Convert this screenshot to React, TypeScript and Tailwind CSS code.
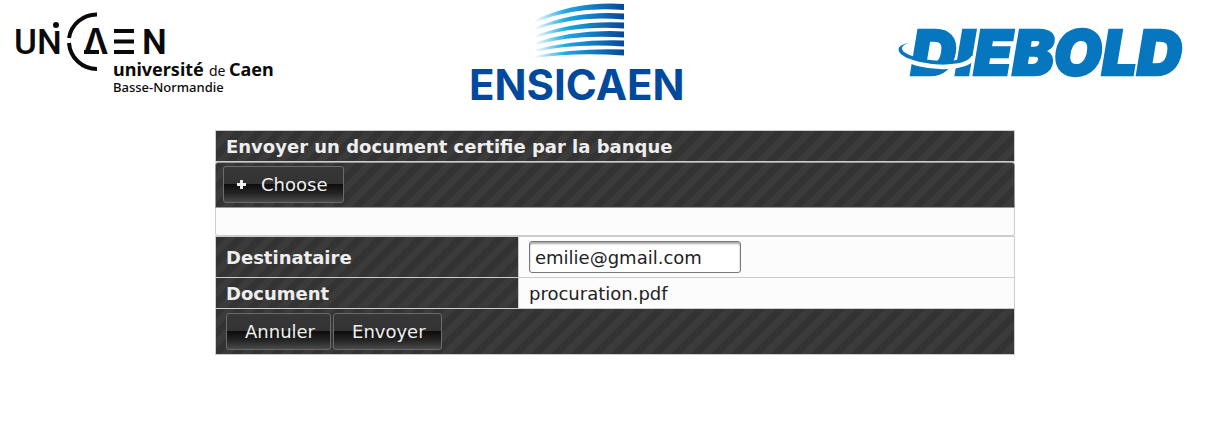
import { useState, type ReactNode } from "react";

const stripes =
  "bg-[#333333] bg-[linear-gradient(135deg,#333333_25%,#3b3b3b_25%,#3b3b3b_50%,#333333_50%,#333333_75%,#3b3b3b_75%)] bg-[length:20px_20px]";

function UnicaenLogo() {
  return (
    <svg viewBox="12 8 264 88" className="w-[264px] shrink" role="img" aria-label="UNICAEN, université de Caen Basse-Normandie">
      <g fill="#0a0a0a" fontFamily="Roboto, sans-serif" fontWeight="500" fontSize="35">
        <text x="14" y="54">UN</text>
        <text x="83" y="54" fontFamily="Inter, sans-serif" fontWeight="600">Λ</text>
        <text x="142" y="54" fontWeight="600">N</text>
      </g>
      <path d="M52 30H63" stroke="#ffffff" strokeWidth="2" />
      <circle cx="56" cy="25" r="3" fill="#0a0a0a" />
      <path d="M97 14.500A28 28 0 0 0 69 38M69 43A28 28 0 0 0 97 69" fill="none" stroke="#0a0a0a" strokeWidth="4" />
      <path d="M114 31H134M114 41.500H134M114 52H134" stroke="#0a0a0a" strokeWidth="4" />
      <path d="M84 52H99" stroke="#0a0a0a" strokeWidth="4" />
      <g fill="#0a0a0a" fontFamily="'Noto Sans', sans-serif">
        <text x="113" y="76" fontSize="18" fontWeight="700">université</text>
        <text x="209" y="76" fontSize="14">de</text>
        <text x="229" y="76" fontSize="18" fontWeight="700">Caen</text>
        <text x="113" y="92" fontSize="13" fontWeight="500">Basse-Normandie</text>
      </g>
    </svg>
  );
}

const sails = [
  "M535 20Q575 1 624 4V10Q575 6 535 22Z",
  "M534 28Q575 10 624 13.500V19.500Q575 15 534 30Z",
  "M534 36Q575 20 624 22.500V28.500Q575 25 534 38Z",
  "M534 43Q575 29 624 31.500V37.500Q575 34 534 45Z",
  "M534 50Q575 39 624 40.500V46.500Q575 43 534 52Z",
  "M534 56Q575 48 624 49.500V55.500Q575 52 534 58Z",
];

function EnsicaenLogo() {
  return (
    <svg viewBox="466 0 242 110" className="w-[242px] shrink" role="img" aria-label="ENSICAEN">
      <defs>
        <linearGradient id="sail" gradientUnits="userSpaceOnUse" x1="534" x2="624" y1="0" y2="0">
          <stop offset="0" stopColor="#ffffff" />
          <stop offset="0.35" stopColor="#1fa9e4" />
          <stop offset="1" stopColor="#07479b" />
        </linearGradient>
      </defs>
      {sails.map((d) => (
        <path key={d} d={d} fill="url(#sail)" />
      ))}
      <text x="469" y="100" fill="#00499c" fontFamily="Inter, sans-serif" fontWeight="700" fontSize="42">
        ENSICAEN
      </text>
    </svg>
  );
}

function DieboldLogo() {
  return (
    <svg viewBox="898 14 290 84" className="w-[290px] shrink" role="img" aria-label="DIEBOLD">
      <text x="911" y="75" fill="#0676bf" stroke="#0676bf" strokeWidth="2.500" fontFamily="Inter, sans-serif" fontWeight="900" fontStyle="italic" fontSize="62">
        DIEBOLD
      </text>
      <path d="M902 52C900 62 932 69 955 66C966 64 973 61 972 56" fill="none" stroke="#ffffff" strokeWidth="5" />
      <path d="M909 43C894 45 895 55 913 60C935 67 968 66 972 55C973 50 967 46 963 45C970 51 969 57 956 60C940 63 914 59 904 52C900 48 902 45 909 43Z" fill="#0676bf" />
    </svg>
  );
}

function BarButton({ children, icon }: { children: ReactNode; icon?: ReactNode }) {
  return (
    <button
      type="button"
      className="flex items-center gap-3 rounded-[3px] border border-[#6b6b6b] bg-[linear-gradient(#373737_0%,#333333_50%,#0e0e0e_50%,#242424_75%,#4a4a4a_100%)] leading-[35px] text-[#eeeeee]"
    >
      {icon}
      {children}
    </button>
  );
}

export default function App() {
  const [recipient, setRecipient] = useState("emilie@gmail.com");
  return (
    <div className="min-h-screen bg-white font-['DejaVu_Sans',Verdana,sans-serif] text-[18px] text-[#222222]">
      <header className="flex items-start justify-between pr-9 pl-3">
        <div className="pt-2"><UnicaenLogo /></div>
        <EnsicaenLogo />
        <div className="pt-[14px]"><DieboldLogo /></div>
      </header>
      <main className="mt-5 pl-[6px]">
        <form className="mx-auto max-w-[800px]">
          <h1 className={`${stripes} border border-[#cccccc] px-[10px] pt-[2px] leading-[28px] font-bold text-[#eeeeee]`}>
            Envoyer un document certifie par la banque
          </h1>
          <section aria-label="Document">
            <div className={`${stripes} flex rounded-t-[3px] border border-[#999999] px-[7px] pt-[3px] pb-1`}>
              <BarButton
                icon={
                  <svg viewBox="0 0 9 9" className="ml-[13px] size-[9px]" aria-hidden="true">
                    <path d="M3 0H6V3H9V6H6V9H3V6H0V3H3Z" fill="#eeeeee" />
                  </svg>
                }
              >
                <span className="pr-4 pl-[3px]">Choose</span>
              </BarButton>
            </div>
            <div className="h-7 rounded-b-[3px] border border-t-0 border-[#cccccc] bg-[#fcfcfc]" />
          </section>
          <table className="w-full table-fixed border-collapse">
            <colgroup>
              <col className="w-[303px]" />
              <col />
            </colgroup>
            <tbody>
              <tr>
                <th scope="row" className={`${stripes} border border-[#cccccc] px-[10px] text-left text-[#eeeeee]`}>
                  <label htmlFor="recipient">Destinataire</label>
                </th>
                <td className="border border-[#cccccc] bg-[#fcfcfc] px-[10px] py-1">
                  <input
                    id="recipient"
                    type="email"
                    value={recipient}
                    onChange={(e) => setRecipient(e.target.value)}
                    className="block h-8 w-[212px] rounded-[3px] border border-[#777777] bg-white px-[5px] shadow-[inset_0_2px_2px_#aaaaaa]"
                  />
                </td>
              </tr>
              <tr>
                <th scope="row" className={`${stripes} border border-[#cccccc] px-[10px] pt-[2px] text-left leading-[28px] text-[#eeeeee]`}>
                  Document
                </th>
                <td className="border border-[#cccccc] bg-[#fcfcfc] px-[10px] pt-[2px] leading-[28px]">procuration.pdf</td>
              </tr>
            </tbody>
          </table>
          <footer className={`${stripes} flex gap-[2px] border border-t-0 border-[#cccccc] px-[10px] py-1`}>
            <BarButton><span className="pr-[15px] pl-[18px]">Annuler</span></BarButton>
            <BarButton><span className="pr-[15px] pl-[18px]">Envoyer</span></BarButton>
          </footer>
        </form>
      </main>
    </div>
  );
}
